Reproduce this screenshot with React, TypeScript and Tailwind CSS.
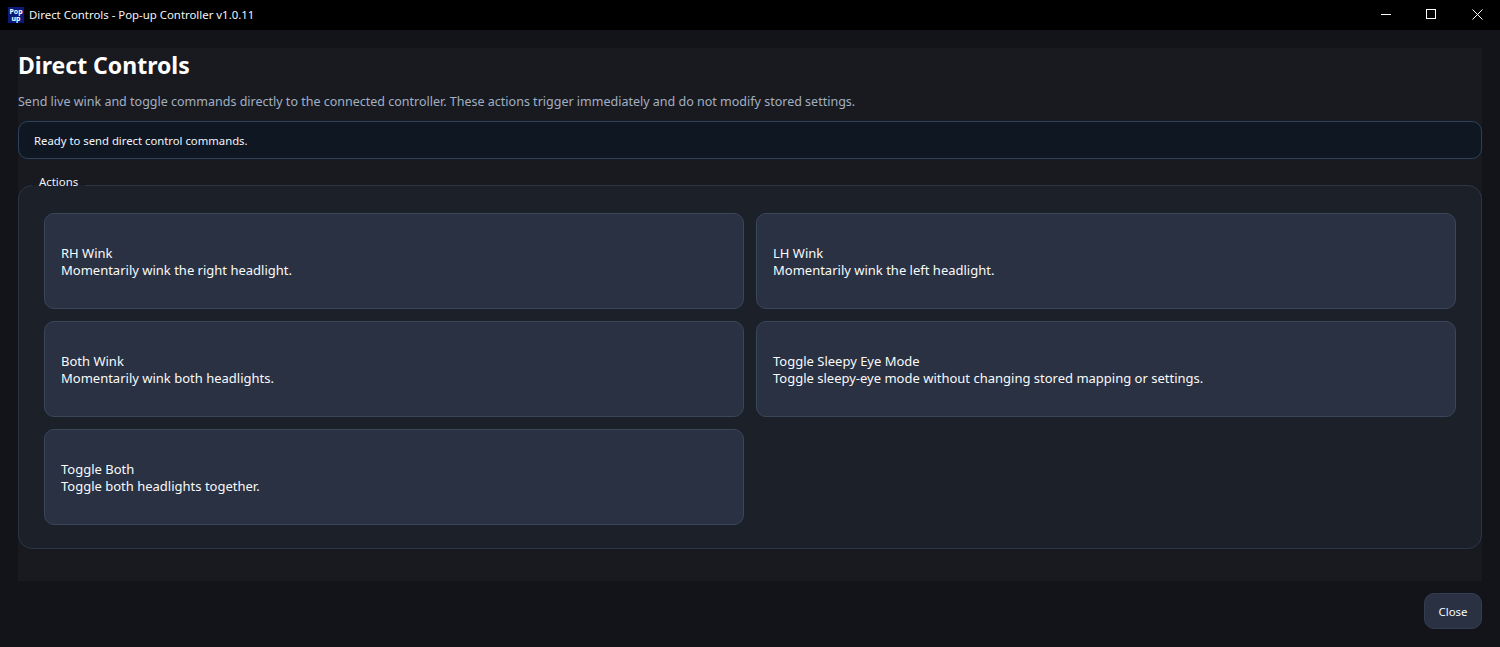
const actions = [
  { title: 'RH Wink', text: 'Momentarily wink the right headlight.' },
  { title: 'LH Wink', text: 'Momentarily wink the left headlight.' },
  { title: 'Both Wink', text: 'Momentarily wink both headlights.' },
  { title: 'Toggle Sleepy Eye Mode', text: 'Toggle sleepy-eye mode without changing stored mapping or settings.' },
  { title: 'Toggle Both', text: 'Toggle both headlights together.' },
];

const TitleBar = () => (
  <div className="h-[30px] bg-black flex items-center text-[#f5f5f5] shrink-0">
    <div className="ml-2 w-4 h-4 bg-[#0a1a7a] text-white text-[7px] leading-[7px] font-bold flex flex-col items-center justify-center">
      <span>Pop</span>
      <span>up</span>
    </div>
    <span className="ml-[5px] text-[11.4px]">Direct Controls - Pop-up Controller v1.0.11</span>
    <div className="ml-auto flex items-center h-full pb-[2px]">
      <div className="w-[46px] h-full flex items-center justify-center">
        <svg className="ml-[2px]" width="10" height="10" viewBox="0 0 10 10"><path d="M0 5.5H10" stroke="#fff" strokeWidth="1" /></svg>
      </div>
      <div className="w-[46px] h-full flex items-center justify-center">
        <svg width="10" height="10" viewBox="0 0 10 10"><rect x="0.5" y="0.5" width="9" height="9" fill="none" stroke="#fff" strokeWidth="1" /></svg>
      </div>
      <div className="w-[46px] h-full flex items-center justify-center">
        <svg width="11" height="11" viewBox="0 0 11 11"><path d="M0.5 0.5L10.5 10.5M10.5 0.5L0.5 10.5" stroke="#fff" strokeWidth="1" /></svg>
      </div>
    </div>
  </div>
);

const App = () => {
  return (
    <div className="h-[647px] w-[1500px] overflow-hidden flex flex-col bg-[#12141a] font-['Noto_Sans',sans-serif]">
      <TitleBar />
      <div className="mx-[18px] mt-[18px] h-[533px] bg-[#181a20] flex flex-col">
        <h1 className="text-[23px] leading-[35px] font-bold text-white">Direct Controls</h1>
        <p className="mt-[10px] text-[12.5px] leading-[18px] text-[#a3b0c2]">
          Send live wink and toggle commands directly to the connected controller. These actions trigger immediately and do not modify stored settings.
        </p>
        <div className="mt-[10px] h-[38px] rounded-[10px] border border-[#2b425c] bg-[#0f1723] px-[15px] pt-[2px] flex items-center text-[11.3px] text-[#f1f5f9]">
          Ready to send direct control commands.
        </div>
        <fieldset className="mt-[14px] h-[376px] min-w-0 rounded-[14px] border border-[#2c3545] bg-[#1c2029] px-[25px] pt-[15px]">
          <legend className="-ml-[12px] px-[7px] pb-[8px] text-[11.4px] leading-[17px] text-[#f1f5f9]">Actions</legend>
          <div className="grid grid-cols-2 gap-x-[12px] gap-y-[12px]">
            {actions.map((a) => (
              <button key={a.title} className="h-[96px] rounded-[10px] border border-[#3a465a] bg-[#2a3142] px-[16px] pt-[2px] flex flex-col justify-center items-start text-left text-[13px] font-[450] leading-[17px] text-[#f8fafc]">
                <span>{a.title}</span>
                <span>{a.text}</span>
              </button>
            ))}
          </div>
        </fieldset>
      </div>
      <div className="mx-[18px] mt-[12px] flex justify-end">
        <button className="w-[58px] h-[36px] pt-[2px] rounded-[10px] border border-[#333d50] bg-[#2a3142] text-[11.4px] text-[#f8fafc]">Close</button>
      </div>
    </div>
  );
};

export default App;
